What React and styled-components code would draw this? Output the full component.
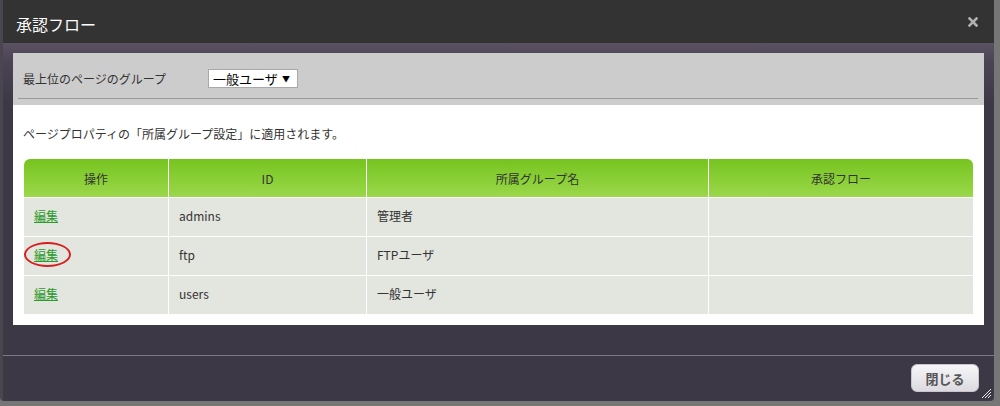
import React from "react";
import styled, { createGlobalStyle } from "styled-components";

const Global = createGlobalStyle`
  html, body { margin: 0; padding: 0; }
  body {
    background: #777777;
    font-family: "Noto Sans CJK JP", "Noto Sans", sans-serif;
    font-size: 12px;
    color: #333;
  }
`;

const Page = styled.div`
  width: 1000px;
  height: 406px;
  background: #767676;
  overflow: hidden;
`;

const Dialog = styled.div`
  position: relative;
  width: 994px;
  height: 401px;
  background: #3d3846;
  border-left: 3px solid #4a4650;
  border-radius: 0 0 4px 4px;
  display: flex;
  flex-direction: column;
  box-sizing: border-box;
`;

const TitleBar = styled.div`
  height: 43px;
  background: #333333;
  display: flex;
  align-items: center;
  justify-content: space-between;
  padding: 0 16px 0 13px;
  flex-shrink: 0;
`;

const Title = styled.h1`
  margin: 0;
  padding-top: 4px;
  font-size: 16px;
  font-weight: normal;
  color: #ffffff;
`;

const CloseIcon = styled.svg`
  width: 10px;
  height: 10px;
  margin-top: 1px;
`;

const Body = styled.div`
  padding: 10px 10px 0 10px;
  background: linear-gradient(#5a5262 0px, #4a4354 20px, #3d3846 60px);
  flex-shrink: 0;
`;

const FilterPanel = styled.div`
  background: #cccccc;
  width: 971px;
  box-sizing: border-box;
  padding: 16px 6px 6px 5px;
`;

const FilterRow = styled.div`
  display: flex;
  align-items: center;
  padding-left: 5px;
  height: 19px;
`;

const FilterLabel = styled.span`
  width: 185px;
  font-size: 12px;
  color: #333;
`;

const Select = styled.div`
  width: 90px;
  height: 19px;
  box-sizing: border-box;
  background: #fff;
  border: 1px solid #a9a9a9;
  display: flex;
  align-items: center;
  justify-content: space-between;
  padding: 0 7px 0 4px;
  font-size: 13px;
  color: #000;
`;

const Arrow = styled.span`
  font-size: 8px;
  color: #000;
`;

const Rule = styled.div`
  margin-top: 10px;
  height: 1px;
  background: #9a9a9a;
`;

const ContentPanel = styled.div`
  background: #ffffff;
  width: 971px;
  box-sizing: border-box;
  padding: 20px 11px 11px 11px;
`;

const Note = styled.p`
  margin: 0 0 16px -1px;
  line-height: 18px;
  font-size: 12px;
  color: #333;
`;

const Table = styled.table`
  width: 949px;
  border-collapse: separate;
  border-spacing: 0;
  table-layout: fixed;
`;

const Th = styled.th`
  height: 38px;
  padding: 0;
  font-size: 12px;
  font-weight: normal;
  color: #333;
  text-align: center;
  background: linear-gradient(#76c41f, #9bd84b);
  border-left: 1px solid #ffffff;
  &:first-child { border-left: none; border-top-left-radius: 6px; }
  &:last-child { border-top-right-radius: 6px; }
`;

const Td = styled.td`
  height: 35px;
  padding: 0 10px 3px 10px;
  font-size: 12px;
  color: #333;
  background: #e3e5df;
  border-top: 1px solid #ffffff;
  border-left: 1px solid #ffffff;
  vertical-align: middle;
  &:first-child { border-left: none; }
`;

const EditCell = styled.span`
  position: relative;
  display: inline-block;
`;

const EditLink = styled.a`
  color: #2a9a2a;
  text-decoration: underline;
  font-size: 12px;
  cursor: pointer;
`;

const Circle = styled.span`
  position: absolute;
  left: -10px;
  top: -4px;
  width: 47px;
  height: 25px;
  border: 2px solid #d42020;
  border-radius: 50%;
  box-sizing: border-box;
`;

const Footer = styled.div`
  margin-top: 30px;
  border-top: 1px solid #7d7785;
  display: flex;
  justify-content: flex-end;
  padding: 8px 15px 0 0;
`;

const Button = styled.button`
  width: 68px;
  height: 28px;
  border: 1px solid #c8c6cc;
  border-radius: 6px;
  background: linear-gradient(#f6f6f8, #dcdae0);
  font-family: "Noto Sans CJK JP", sans-serif;
  font-size: 13px;
  font-weight: bold;
  color: #555;
  cursor: pointer;
  padding: 0;
`;

const Grip = styled.svg`
  position: absolute;
  right: 2px;
  bottom: 2px;
  width: 11px;
  height: 11px;
`;

const rows = [
  { id: "admins", name: "管理者" },
  { id: "ftp", name: "FTPユーザ", marked: true },
  { id: "users", name: "一般ユーザ" },
];

export default function App() {
  return (
    <Page>
      <Global />
      <Dialog>
        <TitleBar>
          <Title>承認フロー</Title>
          <CloseIcon viewBox="0 0 10 10">
            <path d="M1.5 1.5 L8.5 8.5 M8.5 1.5 L1.5 8.5" stroke="#b0b0b0" strokeWidth="2.6" strokeLinecap="square" />
          </CloseIcon>
        </TitleBar>
        <Body>
          <FilterPanel>
            <FilterRow>
              <FilterLabel>最上位のページのグループ</FilterLabel>
              <Select>
                <span>一般ユーザ</span>
                <Arrow>▼</Arrow>
              </Select>
            </FilterRow>
            <Rule />
          </FilterPanel>
          <ContentPanel>
            <Note>ページプロパティの「所属グループ設定」に適用されます。</Note>
            <Table>
              <colgroup>
                <col style={{ width: 144 }} />
                <col style={{ width: 198 }} />
                <col style={{ width: 342 }} />
                <col style={{ width: 265 }} />
              </colgroup>
              <thead>
                <tr>
                  <Th>操作</Th>
                  <Th>ID</Th>
                  <Th>所属グループ名</Th>
                  <Th>承認フロー</Th>
                </tr>
              </thead>
              <tbody>
                {rows.map((r) => (
                  <tr key={r.id}>
                    <Td>
                      <EditCell>
                        <EditLink>編集</EditLink>
                        {r.marked && <Circle />}
                      </EditCell>
                    </Td>
                    <Td>{r.id}</Td>
                    <Td>{r.name}</Td>
                    <Td />
                  </tr>
                ))}
              </tbody>
            </Table>
          </ContentPanel>
        </Body>
        <Footer>
          <Button>閉じる</Button>
        </Footer>
        <Grip viewBox="0 0 11 11">
          <path d="M1 10 L10 1 M4 10 L10 4 M7 10 L10 7" stroke="#e8e8e8" strokeWidth="1" />
        </Grip>
      </Dialog>
    </Page>
  );
}
